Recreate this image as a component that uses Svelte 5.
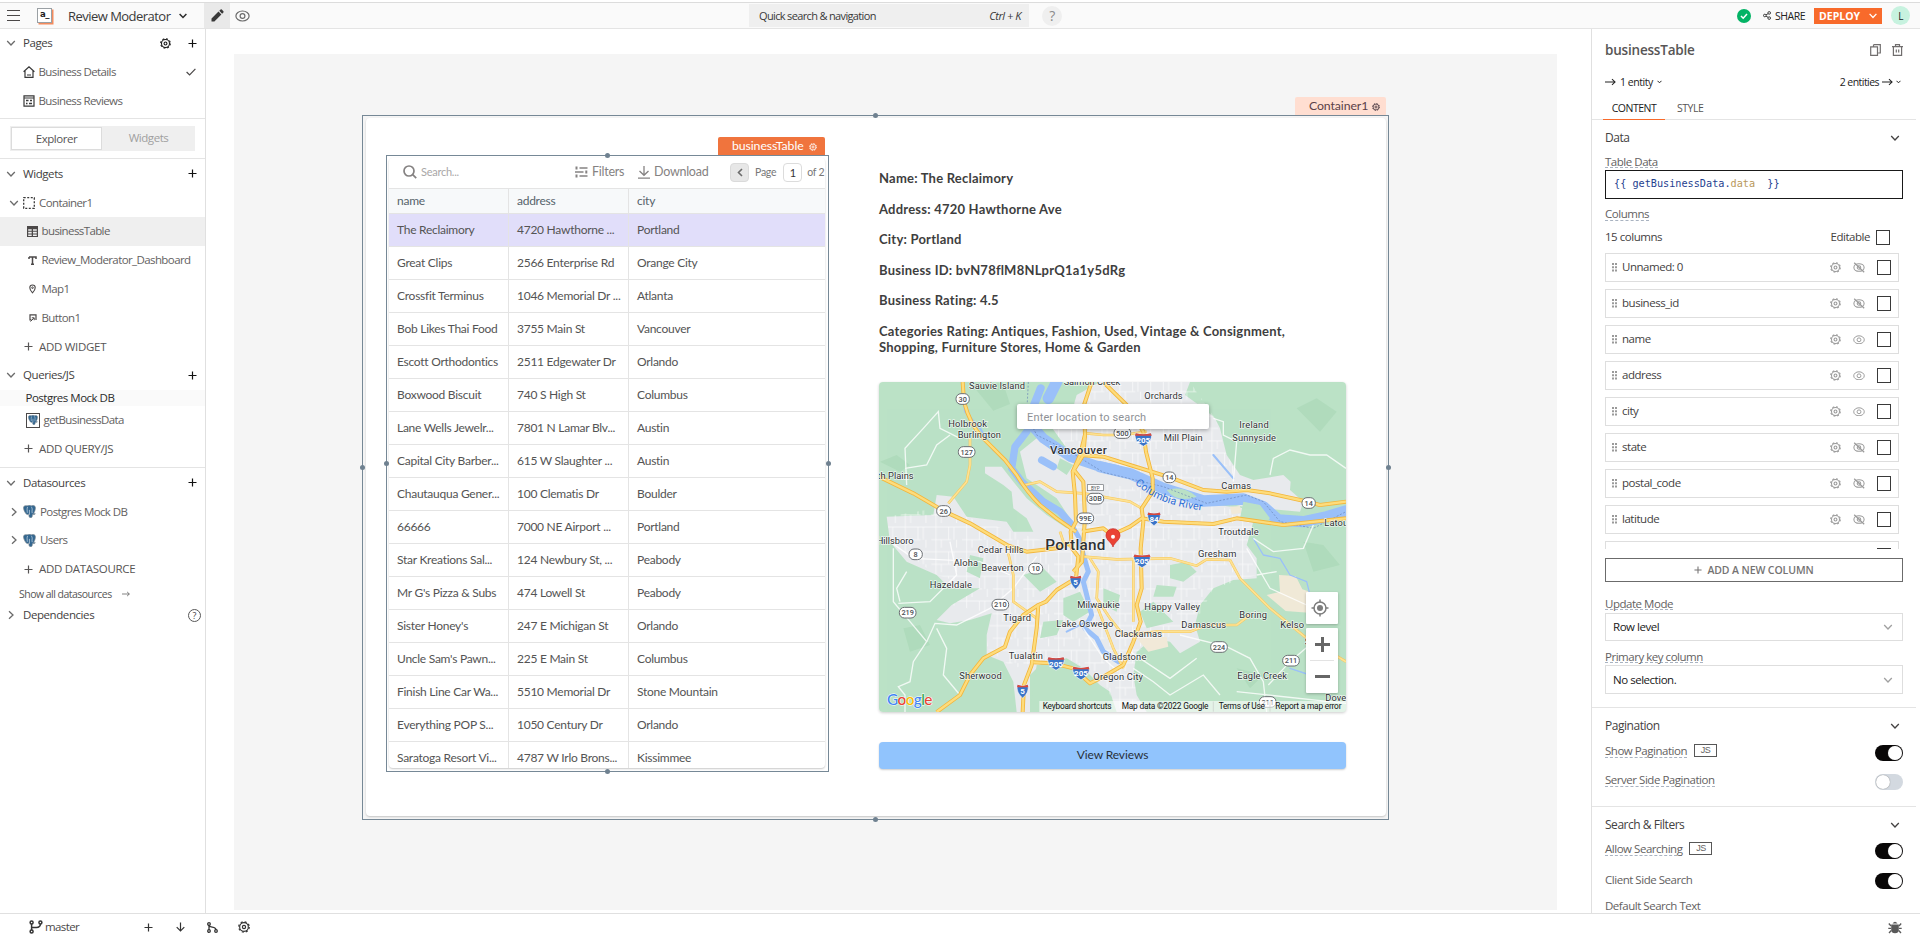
<script>
  const rows = [
    ['The Reclaimory', '4720 Hawthorne ...', 'Portland'],
    ['Great Clips', '2566 Enterprise Rd', 'Orange City'],
    ['Crossfit Terminus', '1046 Memorial Dr ...', 'Atlanta'],
    ['Bob Likes Thai Food', '3755 Main St', 'Vancouver'],
    ['Escott Orthodontics', '2511 Edgewater Dr', 'Orlando'],
    ['Boxwood Biscuit', '740 S High St', 'Columbus'],
    ['Lane Wells Jewelr...', '7801 N Lamar Blv...', 'Austin'],
    ['Capital City Barber...', '615 W Slaughter ...', 'Austin'],
    ['Chautauqua Gener...', '100 Clematis Dr', 'Boulder'],
    ['66666', '7000 NE Airport ...', 'Portland'],
    ['Star Kreations Sal...', '124 Newbury St, ...', 'Peabody'],
    ["Mr G's Pizza & Subs", '474 Lowell St', 'Peabody'],
    ["Sister Honey's", '247 E Michigan St', 'Orlando'],
    ["Uncle Sam's Pawn...", '225 E Main St', 'Columbus'],
    ['Finish Line Car Wa...', '5510 Memorial Dr', 'Stone Mountain'],
    ['Everything POP S...', '1050 Century Dr', 'Orlando'],
    ['Saratoga Resort Vi...', '4787 W Irlo Brons...', 'Kissimmee']
  ];
  const details = [
    'Name: The Reclaimory',
    'Address: 4720 Hawthorne Ave',
    'City: Portland',
    'Business ID: bvN78flM8NLprQ1a1y5dRg',
    'Business Rating: 4.5',
    'Categories Rating: Antiques, Fashion, Used, Vintage & Consignment, Shopping, Furniture Stores, Home & Garden'
  ];
  const columns = [
    ['Unnamed: 0', false],
    ['business_id', false],
    ['name', true],
    ['address', true],
    ['city', true],
    ['state', false],
    ['postal_code', false],
    ['latitude', false],
    ['', false]
  ];
  // Map labels: text, x, y (baseline), width
  const places = [
    ['Sauvie Island', 297, 43, 168], ['Salmon Creek', 581, 30, 170], ['Orchards', 823, 72, 115],
    ['Holbrook', 235, 156, 116], ['Burlington', 263, 190, 130], ['Mill Plain', 881, 198, 117],
    ['Ireland', 1108, 159, 88], ['Sunnyside', 1087, 197, 131], ['th Plains', 22, 311, 109],
    ['Camas', 1054, 341, 89], ['Hillsboro', 20, 506, 111], ['Cedar Hills', 323, 533, 138],
    ['Aloha', 251, 572, 73], ['Beaverton', 334, 588, 127], ['Hazeldale', 179, 639, 127],
    ['Troutdale', 1045, 480, 121], ['Latourell', 1363, 453, 110], ['Gresham', 984, 545, 115],
    ['Milwaukie', 622, 698, 127], ['Happy Valley', 823, 704, 167], ['Boring', 1108, 728, 83],
    ['Damascus', 934, 760, 134], ['Kelso', 1231, 759, 71], ['Lake Oswego', 559, 756, 171],
    ['Clackamas', 734, 785, 142], ['Tigard', 400, 738, 83], ['Tualatin', 416, 852, 103],
    ['Gladstone', 698, 855, 131], ['Sherwood', 268, 912, 127], ['Oregon City', 670, 915, 149],
    ['Eagle Creek', 1102, 911, 149], ['Dover', 1366, 978, 72], ['Sandy', 1304, 809, 70]
  ];
  const shields = [
    ['30', 278, 72, 40], ['127', 290, 231, 50], ['26', 221, 408, 42], ['8', 137, 538, 40], ['10', 497, 581, 42],
    ['219', 113, 713, 50], ['210', 391, 689, 50], ['99E', 646, 430, 50], ['30B', 676, 371, 50], ['500', 757, 174, 50],
    ['14', 898, 307, 38], ['14', 1316, 384, 40], ['224', 1047, 816, 50], ['211', 1263, 857, 50], ['211', 1193, 981, 50]
  ];
  const interstates = [
    ['205', 820, 192], ['84', 852, 430], ['205', 816, 556], ['5', 617, 620], ['205', 558, 864], ['205', 633, 893], ['5', 458, 947]
  ];
  const highways = [
    'M278,21 L282,80 Q300,150 340,190 L405,255 L440,300 Q470,350 510,390 L560,430 L600,458 L618,470',
    'M27,305 L130,355 L225,410 L300,445 L415,512 L470,530 L560,520 L610,500',
    'M665,21 L642,90 L645,180 L630,240 L608,290 L615,360 L618,440 L602,470 L606,520 L625,545 L618,610 L560,645 L528,680 L505,690 L500,760 L485,870 L462,930 L458,1011',
    'M645,180 L640,240 L612,285 L640,320 L645,430 L640,500 L636,560 L610,590',
    'M700,21 L770,90 L820,170 L828,230 L848,310 L848,350 L815,400 L820,440 L812,520 L815,640 L800,690 L812,740 L790,800 L760,870 L700,905 L660,925 L610,880 L550,865 L490,862',
    'M630,240 L700,245 L780,270 L900,307 L1000,345 L1070,350 L1130,345 L1200,355 L1290,375 L1350,390 L1428,380',
    'M636,470 L700,460 L725,480 L780,455 L815,430 L880,440 L1030,447 L1100,430 L1240,450 L1428,430',
    'M505,690 L460,720 L420,770 L405,815 L340,850 L300,900 L270,960 L200,1011'
  ];
  const arterials = [
    'M300,190 L300,270 L290,320 L235,385',
    'M465,330 L510,320 L560,350 L640,355 L780,380 L815,400',
    'M640,545 L740,553 L900,550 L980,572 L1010,553 L1080,555 L1110,610 L1200,700 L1310,790 L1428,860',
    'M660,550 L685,590 L680,670 L720,730 L760,780 L860,770 L960,770 L1010,750 L1100,750 L1140,720',
    'M790,553 L790,740 M680,690 L730,820 L760,880',
    'M415,535 L430,600 L430,680 L500,730 M650,175 L700,180 L760,180 L830,170',
    'M610,520 L580,500 L570,470'
  ];
  const byways = [
    'M70,520 L70,680 L120,740 L170,800 L130,860 L120,920 L85,935 L105,960 L105,1011',
    'M85,685 L180,680 L260,600 L240,500 M170,800 L195,745 L260,750 L360,700 L430,640 L500,545',
    'M60,500 L130,550 L330,560 L420,600 M110,330 L105,220 L160,160 L205,110 L210,160 L270,190',
    'M105,280 L170,270 L200,210 L240,180 M1030,130 L1060,140 L1060,180 L1100,200 L1090,320',
    'M1200,300 L1210,250 L1260,225 L1320,240 L1370,240 L1428,280 M1150,490 L1210,530 L1300,520 L1330,450',
    'M1130,520 L1200,640 L1310,690 M1160,600 L1220,590 M930,780 L1070,815 L1140,850 L1180,920 L1190,1011',
    'M790,880 L850,920 L900,960 L1000,900 L1050,960 M780,830 L900,910 L980,850 M640,760 L700,850 L745,890',
    'M1195,930 L1260,860 L1330,800 M200,760 L230,820 L220,900 L270,960 M110,590 L80,640 L90,680 M1100,950 L1428,985'
  ];
</script>

{#snippet chev(dir = 'down')}
  <svg class="ic chev {dir}" width="10" height="10" viewBox="0 0 10 10"><path d="M1.2 3l3.8 4 3.8-4" fill="none" stroke="currentColor" stroke-width="1.3" /></svg>
{/snippet}
{#snippet plus(s = 9)}
  <svg class="ic" width={s} height={s} viewBox="0 0 9 9"><path d="M4.500 .5v8M.5 4.500h8" stroke="currentColor" stroke-width="1.200" /></svg>
{/snippet}
{#snippet gear(s = 12)}
  <svg class="ic" width={s} height={s} viewBox="0 0 16 16" fill="none" stroke="currentColor"><circle cx="8" cy="8" r="5.800" stroke-width="1.500" /><circle cx="8" cy="8" r="7" stroke-width="1.600" stroke-dasharray="2.750 2.750" /><circle cx="8" cy="8" r="2.100" stroke-width="1.600" /></svg>
{/snippet}
{#snippet eye(s = 14)}
  <svg class="ic" width={s} height={s * 0.8} viewBox="0 0 15 12" fill="none" stroke="currentColor" stroke-width="1.200"><ellipse cx="7.500" cy="6" rx="6.600" ry="5" /><circle cx="7.500" cy="6" r="2.400" /></svg>
{/snippet}
{#snippet eyeOff()}
  <svg class="ic" width="12" height="11" viewBox="0 0 15 13" fill="none" stroke="currentColor" stroke-width="1.300"><ellipse cx="7.500" cy="6.500" rx="6.400" ry="4.800" /><circle cx="7.500" cy="6.500" r="2.200" /><path d="M1.500 .5l12.500 12" stroke-width="1.500" /></svg>
{/snippet}
{#snippet elephant(s = 13)}
  <svg class="ic" width={s} height={s} viewBox="0 0 16 16"><path d="M.6 3.200C.6 1 3 .5 5.200 1 7 .1 9 .2 10.300 1c2.400-.7 5-.2 5 2.300 0 2.600-1 5.200-2.300 7.200l2.200.3c-.7 1-2.300 1.200-3.500.9-.2 1.800-.2 3.500-1.600 3.900-1.700.4-2.700-.6-2.800-2.300l-.1-2.200c-1.500 1.300-2.900.7-3.900-.8C1.700 8 .6 5.400.6 3.200z" fill="#336791" stroke="#7d8890" stroke-width=".8" /><path d="M5.600 2.400c-.8 2-.5 4.300-.3 7.200M10.200 2.200c1 1.500 1.400 3 .9 5.300l.2 2.600M7.900 6v6" fill="none" stroke="#dfe9f2" stroke-width=".8" /></svg>
{/snippet}
{#snippet arrow(w = 12)}
  <svg class="ic" width={w} height="8" viewBox="0 0 12 8" fill="none" stroke="currentColor" stroke-width="1.100"><path d="M0 4h11M7.600 .8L11 4 7.600 7.200" /></svg>
{/snippet}
{#snippet branch(s = 12)}
  <svg class="ic" width={s} height={s} viewBox="0 0 14 14" fill="none" stroke="currentColor" stroke-width="1.500"><circle cx="2.600" cy="2.500" r="1.500" /><circle cx="2.600" cy="11.500" r="1.500" /><circle cx="11.400" cy="2.500" r="1.500" /><path d="M2.600 4v6M11.400 4c0 3.200-2 3.400-4 3.400H2.800" /></svg>
{/snippet}
{#snippet toggle(on)}<span class="toggle" class:on><i></i></span>{/snippet}

<div class="app">
  <header>
    <svg class="burger" width="14" height="13" viewBox="0 0 14 13"><path d="M0 1.500h13M0 6.500h13M0 11.500h13" stroke="#4b4848" stroke-width="1.200" /></svg>
    <span class="logo"><b>a_</b></span>
    <span class="appname">Review Moderator</span>
    <svg class="name-chev" width="8" height="6" viewBox="0 0 8 6"><path d="M.6.9L4 4.500 7.400.9" fill="none" stroke="#2b2b2b" stroke-width="1.500" /></svg>
    <span class="mode"><svg width="13" height="13" viewBox="0 0 13 13" fill="#393939"><path d="M.5 12.500V9.600L7.500 2.600l2.900 2.900-7 7zM8.300 1.800L9.600.6q.6-.5 1.200 0l1.600 1.600q.5.6 0 1.200l-1.300 1.300z" /></svg></span>
    <span class="preview">{@render eye(15)}</span>
    <div class="omni"><span>Quick search &amp; navigation</span><em>Ctrl + K</em></div>
    <span class="help">?</span>
    <div class="actions">
      <svg width="14" height="14" viewBox="0 0 14 14"><circle cx="7" cy="7" r="7" fill="#03b365" /><path d="M4 7l2.200 2.200L10 5" stroke="#fff" stroke-width="1.500" fill="none" /></svg>
      <svg class="share-i" width="8" height="9" viewBox="0 0 8 9" fill="none" stroke="#393939" stroke-width="1"><circle cx="1.800" cy="4.500" r="1.300" /><circle cx="6.200" cy="1.900" r="1.300" /><circle cx="6.200" cy="7.100" r="1.300" /><path d="M3 3.900l2-1.200M3 5.100l2 1.200" /></svg>
      <span class="share">SHARE</span>
      <span class="deploy"><b>DEPLOY</b><svg width="8" height="6" viewBox="0 0 8 6"><path d="M.6.9L4 4.500 7.400.9" fill="none" stroke="#fff" stroke-width="1.300" /></svg></span>
      <span class="avatar">L</span>
    </div>
  </header>

  <div class="work">
    <aside class="side">
      <div class="row head">{@render chev()}<span>Pages</span><i class="pg">{@render gear(11)}</i>{@render plus()}</div>
      <div class="row l1"><svg class="ic" width="12" height="12" viewBox="0 0 12 12" fill="none" stroke="#393939" stroke-width="1.200"><path d="M.6 5.800L6 .8l5.400 5M2 5v6.300h8V5M4 9h4" /></svg><span>Business Details</span>
        <svg class="end" width="10" height="8" viewBox="0 0 10 8"><path d="M.6 4l3 3L9.400.8" fill="none" stroke="#4b4848" stroke-width="1.200" /></svg></div>
      <div class="row l1"><svg class="ic" width="12" height="12" viewBox="0 0 12 12" fill="none" stroke="#393939"><path d="M1 .8h10v10.400H1zM1 3h10" stroke-width="1.200" /><path d="M3 5.500h2.500M7 5.500h2M3 8.500h1.500M6 8.500h3" stroke-width="1.400" /></svg><span>Business Reviews</span></div>
      <div class="tabs"><b>Explorer</b><span>Widgets</span></div>
      <div class="row head">{@render chev()}<span>Widgets</span><i></i>{@render plus()}</div>
      <div class="row l1 has-chev">{@render chev()}<svg class="ic" width="12" height="12" viewBox="0 0 12 12"><rect x=".7" y=".7" width="10.600" height="10.600" fill="none" stroke="#393939" stroke-width="1.300" stroke-dasharray="2 1.530" /></svg><span>Container1</span></div>
      <div class="row l2 active"><svg class="ic" width="11" height="11" viewBox="0 0 11 11"><path d="M0 0h11v11H0z" fill="#4b4848" /><path d="M1.200 3.200h3.500v1.600H1.200zM6 3.200h3.800v1.600H6zM1.200 5.800h3.500v1.600H1.200zM6 5.800h3.800v1.600H6zM1.200 8.400h3.500v1.500H1.200zM6 8.400h3.800v1.500H6z" fill="#efefef" /></svg><span>businessTable</span></div>
      <div class="row l2"><svg class="ic" width="11" height="11" viewBox="0 0 11 11"><path d="M2 2h7v2M2 4V2M5.500 2v7.200M4 9.200h3" fill="none" stroke="#4b4848" stroke-width="1.500" /></svg><span>Review_Moderator_Dashboard</span></div>
      <div class="row l2"><svg class="ic" width="11" height="11" viewBox="0 0 11 11" fill="none" stroke="#4b4848"><path d="M5.500 9.800C3.600 7.900 2.800 6.400 2.800 4.700a2.700 2.700 0 015.400 0c0 1.700-.8 3.200-2.700 5.100z" stroke-width="1.100" /><circle cx="5.500" cy="4.700" r=".8" /></svg><span>Map1</span></div>
      <div class="row l2"><svg class="ic" width="11" height="11" viewBox="0 0 11 11" fill="none" stroke="#4b4848" stroke-width="1.200"><path d="M4.500 7.800H3v-5h6V8" /><path d="M3.500 9.500L6.800 6.200M4.800 5.800h2.400v2.400" stroke-width="1" /></svg><span>Button1</span></div>
      <div class="row l1 add">{@render plus(9)}<span>ADD WIDGET</span></div>
      <div class="row head">{@render chev()}<span>Queries/JS</span><i></i>{@render plus()}</div>
      <div class="group">Postgres Mock DB</div>
      <div class="row query"><b>{@render elephant(10)}</b><span>getBusinessData</span></div>
      <div class="row l1 add last">{@render plus(9)}<span>ADD QUERY/JS</span></div>
      <div class="row head">{@render chev()}<span>Datasources</span><i></i>{@render plus()}</div>
      <div class="row l1 has-chev">{@render chev('right')}{@render elephant(13)}<span>Postgres Mock DB</span></div>
      <div class="row l1 has-chev">{@render chev('right')}{@render elephant(13)}<span>Users</span></div>
      <div class="row l1 add">{@render plus(9)}<span>ADD DATASOURCE</span></div>
      <div class="showall">Show all datasources {@render arrow(8)}</div>
      <div class="row head dep">{@render chev('right')}<span>Dependencies</span><i></i><b class="q">?</b></div>
    </aside>

    <main>
      <div class="canvas">
        <div class="container">
          <div class="frame outer"><i class="t"></i><i class="b"></i><i class="l"></i><i class="r"></i></div>
          <div class="tag ctag">Container1 {@render gear(8)}</div>
          <div class="tablebox">
            <div class="frame inner"><i class="t"></i><i class="b"></i><i class="l"></i><i class="r"></i></div>
            <div class="tag ttag">businessTable {@render gear(8)}</div>
            <div class="table">
              <div class="toolbar">
                <svg width="14" height="14" viewBox="0 0 14 14" fill="none" stroke="#858282" stroke-width="1.700"><circle cx="6" cy="6" r="5" /><path d="M9.700 9.700l3.500 3.500" /></svg>
                <span class="ph">Search...</span>
                <svg width="13" height="12" viewBox="0 0 13 12" fill="none" stroke="#858282" stroke-width="1.500"><path d="M4.500 2h8M0 6h8.500M4.500 10h8" /><path d="M.5 2h2M10.300 6h2M.5 10h2" stroke-width="2.800" /></svg>
                <span class="tb f">Filters</span>
                <svg width="12" height="13" viewBox="0 0 12 13" fill="none" stroke="#858282" stroke-width="1.300"><path d="M6 0v9M1.500 5L6 9.300 10.500 5M0 12.200h12" /></svg>
                <span class="tb d">Download</span>
                <span class="prev"><svg width="6" height="9" viewBox="0 0 6 9"><path d="M5 1L1.500 4.500 5 8" fill="none" stroke="#6b6b6b" stroke-width="1.600" /></svg></span>
                <span class="pgt">Page</span><span class="num">1</span><span class="pgt">of 2</span>
              </div>
              <div class="tr th"><span>name</span><span>address</span><span>city</span></div>
              {#each rows as r, i}
                <div class="tr" class:sel={i === 0}>{#each r as c}<span>{c}</span>{/each}</div>
              {/each}
            </div>
          </div>
          <div class="info">
            <div class="details">{#each details as d}<p>{d}</p>{/each}</div>
            <div class="map">
              <svg width="467" height="330" viewBox="27 21 1401 990">
                <defs>
                  <pattern id="streets" width="92" height="74" patternUnits="userSpaceOnUse"><path d="M0 12H92M14 0V74M52 12V50M0 50H60M76 50V74M30 50V74M68 12V50" stroke="#fff" stroke-width="2.200" fill="none" /></pattern>
                  <path id="river-name" d="M794,326 C850,374 905,396 1020,410" />
                </defs>
                <path fill="#bbe2c6" d="M27 21h1401v990H27z" />
                <path fill="#a8d7b6" opacity=".6" d="M30,260l50-20 40 30-30 20zM300,22l100 5 20 60-50 20zM1280,100l60-30 60 40-50 60zM1300,500l60 10 50 60-80 20zM100,760l50-10 30 60-60 20zM1100,880l80 20-40 40z" />
                <path fill="#e8eaed" d="M690,21H960L945,60 1000,100 1035,130 1050,160 1070,240 1110,300 1150,315 1240,300 1262,320 1260,345 1300,380 1290,410 1120,395 900,340 700,270 590,220 540,150 600,130 620,60z" />
                <path fill="#e8eaed" d="M345,275L395,275 430,320 470,370 530,420 590,460 600,430 560,370 470,310 450,230 500,190 590,230 700,280 860,325 1000,385 1120,400 1150,440 1130,510 1160,550 1160,610 1090,615 1030,640 990,690 975,750 990,800 930,835 900,800 850,790 800,830 790,900 800,960 830,1011 740,1011 720,950 690,930 640,880 590,850 520,860 480,900 480,1011 440,1011 430,920 400,860 350,840 350,780 365,715 300,735 240,745 200,735 245,690 330,640 240,640 200,600 110,560 60,500 50,425 190,420 200,360 250,365 290,425 410,440 430,470 490,470 470,430 430,400 425,350 400,330 345,295z" />
                <path fill="url(#streets)" opacity=".8" d="M690,21H960L1035,130 1070,240 1110,300 900,340 700,270 590,220 540,150zM640,320L860,345 1110,410 1150,440 1130,510 1160,600 1030,640 975,750 800,830 800,1000 740,1000 690,900 590,850 500,860 430,880 350,820 365,715 245,690 330,640 200,600 60,500 50,425 200,400 290,425 430,470 600,520z" />
                <path fill="#bbe2c6" d="M460,600l60-20 40 40-50 30zM580,670l50-20 30 60-50 30-30-20zM520,740l60-5-20 45-50 10zM900,570l50-10 30 30-40 30-40-10zM860,630l60 5-10 30-60 0zM700,640l50 20-10 50-40-20zM850,680l60 60-80 20-20-50zM300,540l40 10-10 60-40-20zM500,870l80-10 60 50 20 101H480zM570,250l40 20-20 30-30-20z" />
                <path fill="#f1e9d8" d="M1190,660l40-10-3-50 50 3 20 40 30 10-10 60-70-5zM1080,395l30-2 5 20-30 5zM800,790l90-5 5 30-60 15z" />
                <g fill="none" stroke="#9ac0f9" stroke-linejoin="round" stroke-linecap="round">
                  <path stroke-width="6" d="M275,21L285,110 330,160 370,225 410,255M1030,240L1090,310M590,770L650,740" />
                  <path stroke-width="4" d="M1150,490L1180,540 1230,550 1260,600 1310,620 1330,700M1260,880l60 20" />
                  <path stroke-width="34" d="M560,21L535,70" />
                  <path stroke-width="24" d="M512,40L492,90 480,140" />
                  <path stroke-width="30" d="M480,145L520,190 600,245 680,272 740,285" />
                  <path stroke-width="34" d="M690,275L780,296 880,340 1000,378 1120,372 1180,395 1225,435 1300,440 1370,425 1428,408" />
                  <path stroke-width="22" d="M470,170L435,215 425,280 455,320 520,380 570,410 605,450" />
                  <path stroke-width="15" d="M605,450L628,490 640,540 655,590 640,620 655,680 665,720 645,760 680,790 700,830 745,860" />
                  <path stroke-width="22" d="M515,255L550,275" />
                </g>
                <path fill="#bbe2c6" d="M1120,380l50 10 30 40-30 20-60-20zM890,345q50-15 90 20-60 20-90-20z" />
                <path fill="none" stroke="#6a86b8" stroke-width="2" stroke-dasharray="6 5" d="M475,21L470,120 500,180 600,230 700,292 880,335 1010,385 1130,360 1180,380 1230,440 1330,460 1428,410" />
                <g fill="none" stroke="#fff" stroke-width="4" opacity=".8">{#each byways as d}<path {d} />{/each}</g>
                <g fill="none" stroke="#f7c65a" stroke-width="8" stroke-linejoin="round">{#each arterials as d}<path {d} />{/each}</g>
                <g fill="none" stroke="#fde293" stroke-width="5" stroke-linejoin="round">{#each arterials as d}<path {d} />{/each}</g>
                <g fill="none" stroke="#f3b63c" stroke-width="12" stroke-linejoin="round">{#each highways as d}<path {d} />{/each}</g>
                <g fill="none" stroke="#fddc7c" stroke-width="7" stroke-linejoin="round">{#each highways as d}<path {d} />{/each}</g>
                {#each shields as [t, x, y, w]}
                  <rect x={x - w / 2} y={y - 16} width={w} height="32" rx="15" fill="#fff" stroke="#6b6f73" stroke-width="3" />
                  <text class="shield" {x} y={y + 8} text-anchor="middle">{t}</text>
                {/each}
                <rect x="652" y="329" width="48" height="18" fill="#fff" stroke="#6b6f73" stroke-width="2" /><text class="byp" x="676" y="344" text-anchor="middle">BYP</text>
                {#each interstates as [t, x, y]}
                  <g transform="translate({x} {y}) scale({t.length > 2 ? 1.5 : t.length > 1 ? 1.15 : 1} 1.1)"><path d="M-16,-16Q0,-10 16,-16 20,6 0,20 -20,6 -16,-16z" fill="#3a74c8" stroke="#fff" stroke-width="1.500" /><path d="M-15,-16Q0,-10 15,-16L17,-9H-17z" fill="#d9493e" /></g>
                  <text class="ishield" {x} y={y + 11} text-anchor="middle">{t}</text>
                {/each}
                {#each places as [t, x, y, w]}<text class="place" {x} {y} textLength={w}>{t}</text>{/each}
                <text class="place city" x="540" y="238" textLength="170">Vancouver</text>
                <text class="place metro" x="526" y="525" textLength="180">Portland</text>
                <text class="river"><textPath href="#river-name">Columbia River</textPath></text>
                <path d="M729,516C726,503 708,496 708,481a21,20 0 0142,0C750,496 732,503 729,516z" fill="#ea4335" stroke="#c5221f" stroke-width="2" /><circle cx="729" cy="485" r="6" fill="#fff" />
                <path fill="#fff" opacity=".6" d="M508 978h920v33H508z" />
                <g class="legal"><text x="518" y="1002" textLength="206">Keyboard shortcuts</text><text x="755" y="1002" textLength="260">Map data ©2022 Google</text><text x="1046" y="1002" textLength="138">Terms of Use</text><text x="1216" y="1002" textLength="198">Report a map error</text></g>
                <path stroke="#c8ccc9" stroke-width="2" d="M1030 980v30M1200 980v30" />
                <text class="goog" x="51" y="991" textLength="136"><tspan fill="#4285f4">G</tspan><tspan fill="#ea4335">o</tspan><tspan fill="#fbbc04">o</tspan><tspan fill="#4285f4">g</tspan><tspan fill="#34a853">l</tspan><tspan fill="#ea4335">e</tspan></text>
              </svg>
              <span class="mapsearch">Enter location to search</span>
              <span class="mapbtn loc"><svg width="18" height="18" viewBox="0 0 18 18" fill="none" stroke="#7d7d7d" stroke-width="1.500"><circle cx="9" cy="9" r="6" /><circle cx="9" cy="9" r="3" fill="#7d7d7d" stroke="none" /><path d="M9 .5v3M9 14.500v3M.5 9h3M14.500 9h3" /></svg></span>
              <span class="mapbtn zoom"><i class="p"></i><i class="m"></i></span>
            </div>
            <div class="cta">View Reviews</div>
          </div>
        </div>
      </div>
    </main>

    <aside class="props">
      <div class="ptitle"><b>businessTable</b>
        <svg width="11" height="12" viewBox="0 0 11 12" fill="none" stroke="#716e6e" stroke-width="1.200"><path d="M3.500.7h6.800v8.300H8.200M.7 2.800h6.800v8.500H.7zM3.500.7v2" /></svg>
        <svg width="11" height="12" viewBox="0 0 11 12" fill="none" stroke="#716e6e" stroke-width="1.200"><path d="M0 2.700h11M3.500 2.500V.7h4v1.800M1.400 2.700v8.600h8.200V2.700M4.300 5.500v3M6.700 5.500v3" /></svg></div>
      <div class="ents"><span>{@render arrow(11)} 1 entity <svg width="5" height="4" viewBox="0 0 5 4"><path d="M.5.8l2 2 2-2" fill="none" stroke="#222" /></svg></span><span class="e2">2 entities {@render arrow(11)} <svg width="5" height="4" viewBox="0 0 5 4"><path d="M.5.8l2 2 2-2" fill="none" stroke="#222" /></svg></span></div>
      <div class="ptabs"><b>CONTENT</b><span>STYLE</span></div>
      <div class="sec"><span>Data</span>{@render chev()}</div>
      <div class="lab"><u>Table Data</u></div>
      <div class="code">{'{{ getBusinessData'}<i>.</i><em>data</em>{'  }}'}</div>
      <div class="lab cols"><u>Columns</u></div>
      <div class="count"><span>15 columns</span><span>Editable <i class="box"></i></span></div>
      <div class="list">
        {#each columns as [name, visible]}
          <div class="col"><svg width="5" height="9" viewBox="0 0 5 9" fill="#9a9a9a"><path d="M0 0h2v2H0zM3 0h2v2H3zM0 3.300h2v2H0zM3 3.300h2v2H3zM0 6.600h2v2H0zM3 6.600h2v2H3z" /></svg><span>{name}</span>{@render gear(11)}{#if visible}{@render eye(12)}{:else}{@render eyeOff()}{/if}<i class="box"></i></div>
        {/each}
      </div>
      <div class="addcol">{@render plus(8)} ADD A NEW COLUMN</div>
      <div class="lab upd"><u>Update Mode</u></div>
      <div class="select">Row level{@render chev()}</div>
      <div class="lab pk"><u>Primary key column</u></div>
      <div class="select s2">No selection.{@render chev()}</div>
      <div class="sec line"><span>Pagination</span>{@render chev()}</div>
      <div class="opt"><u>Show Pagination</u><b>JS</b>{@render toggle(true)}</div>
      <div class="opt o2"><u>Server Side Pagination</u>{@render toggle(false)}</div>
      <div class="sec line l2nd"><span>Search &amp; Filters</span>{@render chev()}</div>
      <div class="opt"><u>Allow Searching</u><b>JS</b>{@render toggle(true)}</div>
      <div class="opt o2 o3"><u class="plain">Client Side Search</u>{@render toggle(true)}</div>
      <div class="lab"><u class="plain">Default Search Text</u></div>
    </aside>
  </div>

  <footer>
    {@render branch(14)}<span>master</span>
    <i>{@render plus(9)}</i>
    <i><svg width="9" height="10" viewBox="0 0 9 10" fill="none" stroke="currentColor" stroke-width="1.200"><path d="M4.500 .5v8.500M.7 5.200L4.500 9l3.800-3.800" /></svg></i>
    <i><svg width="11" height="11" viewBox="0 0 11 11" fill="none" stroke="currentColor" stroke-width="1.300"><circle cx="2" cy="2" r="1.300" /><circle cx="2" cy="9" r="1.300" /><circle cx="9" cy="9" r="1.300" /><path d="M2 3v5M2 3.500C3 6 9 4 9 8" /></svg></i>
    <i>{@render gear(12)}</i>
    <svg class="bug" width="14" height="13" viewBox="0 0 14 13" fill="#595959" stroke="#595959"><path d="M3.200 3.500h7.600v6Q10.500 12 7 12.300 3.500 12 3.200 9.500z" stroke="none" /><path d="M4.500 2.500Q7-.8 9.500 2.500z" stroke="none" /><path d="M3 5L.8 2.500M11 5l2.200-2.500M3 7.300H.3M11 7.300h2.700M3.300 9.500L1 12M10.700 9.500L13 12" stroke-width="1.300" /></svg>
  </footer>
</div>

<style>
  :global(body) { margin: 0; background: #fff; overflow: hidden; }
  .app { width: 1920px; height: 940px; display: flex; flex-direction: column; font: 11.5px/14px "Open Sans", "Noto Sans", sans-serif; font-stretch: 88%; color: #575555; overflow: hidden; letter-spacing: -0.47px; }
  .app :is(i, em, u) { font-style: normal; text-decoration: none; }
  .ic { flex: none; display: block; }
  .chev.right { transform: rotate(-90deg); }
  b { font-weight: 400; }

  header { flex: none; height: 25px; margin-top: 2px; border-top: 1px solid #dcdcdc; border-bottom: 1px solid #e4e4e4; background: #fafafa; display: flex; align-items: center; }
  .burger { margin-left: 7px; }
  .logo { width: 13px; height: 13px; border: 1px solid #9aa0a4; margin-left: 16px; margin-right: 1px; background: #fff; box-shadow: 1.500px 1.500px 0 #f38b5e; display: flex; justify-content: center; }
  .logo b { font: 700 8.500px/10px "DejaVu Sans", sans-serif; letter-spacing: -0.5px; color: #222; }
  .appname { margin-left: 15px; width: 103px; font-size: 13px; font-weight: 450; letter-spacing: -0.530px; white-space: nowrap; color: #393939; }
  .name-chev { margin-left: 8px; }
  .mode { margin-left: 17px; width: 26px; height: 25px; background: #e9e9e9; display: grid; place-items: center; }
  .preview { margin-left: 5px; color: #6b6b6b; }
  .omni { margin-left: 499px; width: 262px; height: 23px; padding: 0 8px 0 10px; background: #efefef; display: flex; align-items: center; justify-content: space-between; color: #393939; font-size: 11px; letter-spacing: -0.650px; }
  .app .omni em { font-style: italic; letter-spacing: -0.450px; }
  .help { margin-left: 13px; width: 20px; height: 20px; border-radius: 50%; background: #efefef; display: grid; place-items: center; font-size: 14px; color: #8a8a8a; }
  .actions { margin-left: auto; margin-right: 10px; display: flex; align-items: center; color: #222; }
  .share-i { margin: 0 4px 0 12px; }
  .share { width: 39px; font-size: 10.500px; font-weight: 500; }
  .deploy { width: 63px; padding-left: 5px; height: 16px; background: #f86a2b; color: #fff; display: flex; align-items: center; gap: 10px; font-size: 10.500px; letter-spacing: 0; }
  .deploy b { font-weight: 700; width: 40px; }
  .avatar { margin-left: 9px; width: 19px; height: 19px; border-radius: 50%; background: #c7f2df; display: grid; place-items: center; font-size: 10px; }

  .work { flex: 1; min-height: 0; display: flex; }
  .side { width: 205px; border-right: 1px solid #e0e0e0; display: flex; flex-direction: column; }
  .row { flex: none; height: 28.800px; display: flex; align-items: center; white-space: nowrap; color: #636161; letter-spacing: -0.600px; }
  .row > span { flex: 1; }
  .row.head { padding: 0 8px 0 6px; color: #434141; letter-spacing: -0.420px; }
  .row.head span { padding-left: 7px; }
  .head > .ic:last-child { color: #111; }
  .head .chev, .has-chev .chev { color: #6b6b6b; }
  .pg { color: #191919; margin-right: 17px; }
  .l1 { padding: 0 9px 0 22.500px; }
  .l1 > span { padding-left: 4px; }
  .has-chev { padding-left: 9px; }
  .has-chev .chev { margin-right: 4px; }
  .row.add { padding-left: 24px; color: #575555; letter-spacing: -0.300px; }
  .add > span { padding-left: 6px; }
  .last { border-bottom: 1px solid #e4e4e4; padding-bottom: 4px; }
  .l2 { padding-left: 26.500px; }
  .l2 span { padding-left: 4px; }
  .active { background: #efefef; }
  .tabs { margin-top: 3px; padding: 7px 10px 7px; border: solid #e4e4e4; border-width: 1px 0; display: flex; height: 25px; align-items: stretch; line-height: 24px; text-align: center; }
  .tabs b { flex: none; width: 89px; margin: 1px 0 1px 1px; background: #fff; border: 1px solid #dcdcdc; box-shadow: 0 0 0 1px #efefef; line-height: 21px; }
  .tabs span { flex: 1; background: #efefef; color: #a0a0a0; }
  .group { height: 16px; line-height: 16px; background: #fafafa; padding-left: 25.500px; color: #2b2b2b; letter-spacing: -0.500px; }
  .query { padding-left: 26px; }
  .query b { width: 12px; height: 13px; border: 1px solid #4b4848; display: grid; place-items: center; margin-right: 3.500px; }
  .showall { height: 20px; padding-left: 19px; display: flex; align-items: center; gap: 10px; font-size: 10.500px; letter-spacing: -0.520px; color: #575757; }
  .dep { height: 23px; }
  .row.dep { padding-right: 4px; }
  .q { width: 11px; height: 11px; border: 1px solid #575757; border-radius: 50%; font-size: 9px; line-height: 11px; text-align: center; letter-spacing: 0; }

  main { width: 1385px; }
  .canvas { margin: 25px 0 0 28px; width: 1323px; height: 856px; background: #f5f5f5; overflow: hidden; }
  .container { margin: 64px 0 0 132px; width: 1020px; height: 698px; background: #fff; border-radius: 4px; box-shadow: 0 1px 2px rgba(0, 0, 0, .2); position: relative; display: flex; font-family: Lato, sans-serif; }
  .frame { position: absolute; border: 1px solid #768896; pointer-events: none; z-index: 2; }
  .outer { left: -4px; top: -3px; width: 1025px; height: 703px; }
  .inner { left: -3px; top: -3px; width: 441px; height: 615px; }
  .frame i { position: absolute; width: 5px; height: 5px; border-radius: 50%; background: #6f8190; }
  .frame .t { left: 50%; top: -3px; margin-left: -2.500px; }
  .frame .b { left: 50%; bottom: -3px; margin-left: -2.500px; }
  .frame .l { top: 50%; left: -3px; margin-top: -2.500px; }
  .frame .r { top: 50%; right: -3px; margin-top: -2.500px; }
  .tag { position: absolute; height: 18px; display: flex; align-items: center; border-radius: 2px 2px 0 0; font: 12.300px/17px Lato, sans-serif; letter-spacing: -0.100px; box-sizing: border-box; padding-left: 14px; gap: 5px; padding-bottom: 1px; }
  .tag .ic { position: relative; top: 1px; }
  .ctag { right: 0; top: -21px; width: 91px; background: #ffded1; color: #5b3f48; gap: 4px; }
  .ctag .ic { color: #40303a; }
  .ttag { right: 0; top: -21px; width: 107px; background: #f0743d; color: #fff; }
  .tablebox { margin: 40px 0 0 23px; width: 436px; height: 610px; position: relative; }
  .table { height: 610px; overflow: hidden; border-radius: 4px; background: #fff; box-shadow: 0 1px 2px rgba(0, 0, 0, .22); display: flex; flex-direction: column; font-size: 12px; letter-spacing: -0.260px; color: #545454; }
  .toolbar { flex: none; height: 28px; border-bottom: 1px solid #e4e4e4; display: flex; align-items: center; padding: 0 0 2px 14px; color: #858282; white-space: nowrap; }
  .ph { width: 154px; margin-left: 4px; font-size: 11px; color: #a9a7a7; }
  .tb { font-size: 12.500px; margin-left: 4px; }
  .f { width: 46px; } .d { width: 76px; margin-left: 4px; }
  .prev { width: 17px; height: 17px; border: 1px solid #dadada; border-radius: 4px; background: #e7e7e7; display: grid; place-items: center; }
  .pgt { margin-left: 6px; font-size: 10.500px; color: #777; }
  .num { margin-left: 7px; width: 17px; height: 17px; border: 1px solid #dcdcdc; border-radius: 4px; text-align: center; line-height: 17px; color: #333; font-size: 11px; margin-right: -1px; }
  .tr { flex: none; display: grid; grid-template-columns: 120px 120px 1fr; height: 33px; }
  .tr span { border-right: 1px solid #e4e4e4; border-bottom: 1px solid #e4e4e4; padding-left: 8px; line-height: 31px; white-space: nowrap; }
  .tr span:last-child { border-right: 0; }
  .th { height: 25px; background: #f7f9fa; color: #56636b; }
  .th span { line-height: 24px; }
  .sel { background: #e1defa; }
  .info { margin-left: 54px; width: 467px; }
  .details { height: 212px; padding-top: 52px; font-size: 13px; font-weight: 700; line-height: 16px; letter-spacing: .220px; color: #3e3e3e; }
  .details p { margin: 0 0 14.600px; width: 440px; }
  .map { position: relative; height: 330px; border-radius: 4px; overflow: hidden; box-shadow: 0 1px 3px rgba(0, 0, 0, .2); }
  .map svg { display: block; }
  .place { font: 28px Roboto, sans-serif; letter-spacing: 0; fill: #2f3134; stroke: #fff; stroke-width: 4px; stroke-opacity: .75; paint-order: stroke; }
  .city { font-size: 34px; font-weight: 500; }
  .metro { font-size: 46px; font-weight: 500; }
  .shield { font: 500 22px Roboto, sans-serif; letter-spacing: 0; fill: #4b4f54; }
  .byp { font: 14px Roboto, sans-serif; letter-spacing: 0; fill: #4b4f54; }
  .ishield { font: 700 24px Roboto, sans-serif; letter-spacing: 0; fill: #fff; }
  .river { font: 32px Roboto, sans-serif; letter-spacing: .5px; fill: #2f6fd8; }
  .legal { font: 25px Roboto, sans-serif; fill: #111; }
  .goog { font: 500 46px Lato, sans-serif; letter-spacing: 0; stroke: #fff; stroke-width: 3px; paint-order: stroke; }
  .mapsearch { position: absolute; left: 138px; top: 22px; width: 182px; height: 25px; padding-left: 10px; background: #fff; border-radius: 2px; box-shadow: 0 1px 4px rgba(0, 0, 0, .35); font: 11px/27px Roboto, sans-serif; letter-spacing: .150px; color: #8e9196; }
  .mapbtn { position: absolute; right: 8px; width: 32px; background: #fff; border-radius: 1px; box-shadow: 0 1px 3px rgba(0, 0, 0, .25); }
  .loc { top: 210px; height: 32px; display: flex; align-items: center; padding-left: 5px; width: 27px; }
  .zoom { top: 246px; height: 65px; }
  .zoom i { position: absolute; background: #666; }
  .zoom .p { left: 9px; top: 14.500px; width: 15px; height: 3px; }
  .zoom .p::after { content: ""; position: absolute; left: 6px; top: -6px; width: 3px; height: 15px; background: #666; }
  .zoom .m { left: 9px; top: 47px; width: 15px; height: 3px; }
  .zoom::after { content: ""; position: absolute; left: 4px; right: 4px; top: 32px; height: 1px; background: #e3e3e3; }
  .cta { margin-top: 30px; height: 27px; border-radius: 4px; background: #91c4fd; box-shadow: 0 1px 2px rgba(0, 0, 0, .2); text-align: center; line-height: 25px; font-size: 12px; letter-spacing: -.1px; color: #29313a; }

  .props { flex: 1; border-left: 1px solid #e0e0e0; padding: 0 17px 0 13px; overflow: hidden; }
  .ptitle { height: 42px; display: flex; align-items: center; gap: 11px; }
  .ptitle b { flex: 1; font-size: 13.500px; font-weight: 600; letter-spacing: -0.200px; }
  .ents { height: 22px; display: flex; justify-content: space-between; padding-right: 2px; font-size: 10.500px; color: #222; }
  .ents span { display: flex; align-items: center; gap: 4px; }
  .ents .e2 { gap: 3px; letter-spacing: -0.550px; }
  .ptabs { height: 26px; margin: 0 -13px 0 -13px; padding-left: 11px; border-bottom: 1px solid #e4e4e4; display: flex; font-size: 10.500px; }
  .ptabs b { width: 62px; height: 26px; line-height: 30px; text-align: center; color: #191919; border-bottom: 1px solid #f86a2b; }
  .ptabs span { line-height: 30px; padding-left: 12px; }
  .sec { height: 36px; display: flex; align-items: center; justify-content: space-between; padding-right: 3px; color: #434141; font-weight: 450; font-size: 12px; }
  .lab { height: 14px; display: flex; line-height: 11px; color: #636161; }
  .lab u { height: 11px; border-bottom: 1px dashed #a9b3c1; }
  .lab u.plain, .opt u.plain { border: 0; line-height: 14px; }
  .code { height: 27px; border: 1px solid #191919; line-height: 26px; padding-left: 8px; font-family: "DejaVu Sans Mono", monospace; font-size: 10.200px; letter-spacing: 0; color: #1f3f8f; white-space: pre; }
  .code em { color: #b8985a; }
  .cols { margin-top: 9px; height: 13px; }
  .cols u { height: 12px; }
  .count { height: 32px; display: flex; align-items: center; justify-content: space-between; padding-right: 13px; color: #434141; }
  .count span { display: flex; align-items: center; gap: 6px; }
  .box { display: block; width: 12px; height: 13px; border: 1px solid #393939; }
  .list { height: 296px; overflow: hidden; }
  .col { width: 279px; height: 27px; border: 1px solid #dedede; margin-bottom: 7px; padding: 0 7px 0 6px; display: flex; align-items: center; color: #434141; }
  .col span { flex: 1; padding-left: 5px; position: relative; top: -1px; }
  .col .ic { color: #9a9a9a; margin-right: 12px; }
  .addcol { margin-top: 9px; height: 22px; border: 1px solid #6b6b6b; display: flex; align-items: center; justify-content: center; gap: 5px; font-size: 10.500px; font-weight: 600; letter-spacing: -0.100px; color: #757373; }
  .upd { margin-top: 16px; height: 15px; }
  .select { height: 26px; border: 1px solid #dedede; display: flex; align-items: center; justify-content: space-between; padding: 0 9px 0 7px; color: #191919; }
  .select .ic { color: #a0a0a0; }
  .pk { margin-top: 10px; }
  .s2 { height: 27px; }
  .line { margin: 13px -13px 0; padding: 0 16px 0 13px; border-top: 1px solid #e4e4e4; }
  .l2nd { margin-top: 16px; height: 35px; }
  .opt { display: flex; align-items: flex-start; padding-top: 1px; height: 17px; color: #636161; }
  .opt u { height: 12px; line-height: 12px; border-bottom: 1px dashed #a9b3c1; }
  .opt b { margin-left: 7px; width: 21px; height: 11px; border: 1px solid #575757; font: 9px/11px "Liberation Sans", sans-serif; text-align: center; margin-top: -1px; }
  .o2 { margin-top: 12px; height: 16px; padding: 0; }
  .o3 { margin-top: 13px; margin-bottom: 10px; }
  .toggle { margin-left: auto; width: 28px; height: 16px; border-radius: 8px; background: #d3d9e0; display: flex; }
  .toggle i { width: 14px; height: 14px; margin: 1px; border-radius: 50%; background: #fff; box-shadow: 0 0 1px #666; }
  .toggle.on { background: #090707; justify-content: flex-end; }

  footer { flex: none; height: 26px; border-top: 1px solid #e0e0e0; display: flex; align-items: center; padding-left: 29px; color: #333; }
  footer span { margin-left: 2px; width: 87px; font-size: 11.500px; letter-spacing: -0.600px; color: #4b4848; }
  footer i { width: 32px; display: grid; place-items: center; }
  .bug { margin-left: auto; margin-right: 18px; }
</style>
